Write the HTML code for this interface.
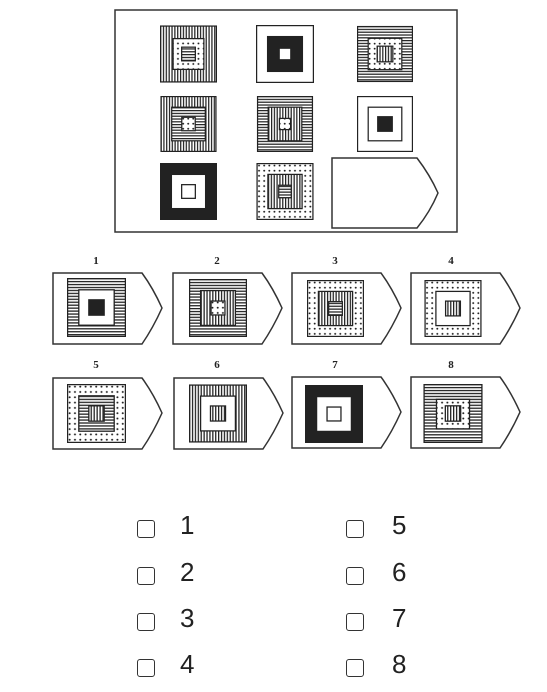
<!DOCTYPE html>
<html><head><meta charset="utf-8"><style>
html,body{margin:0;padding:0;background:#fff;width:547px;height:692px;overflow:hidden}
svg{position:absolute;left:0;top:0}
.opt{position:absolute;font-family:"Liberation Sans",sans-serif;font-size:26px;color:#222}
.cb{position:absolute;width:16px;height:16px;border:1.5px solid #333;border-radius:3px}
</style></head><body>
<svg width="547" height="480" viewBox="0 0 547 480">
<defs>
<pattern id="v" width="5" height="5" patternUnits="userSpaceOnUse"><rect width="5" height="5" fill="#fff"/><rect x="0" width="2.2" height="5" fill="#222"/></pattern>
<pattern id="h" width="5" height="5" patternUnits="userSpaceOnUse"><rect width="5" height="5" fill="#fff"/><rect y="0" width="5" height="2.2" fill="#222"/></pattern>
<pattern id="d" width="9" height="9" patternUnits="userSpaceOnUse"><rect width="9" height="9" fill="#fff"/><circle cx="4.5" cy="4.5" r="1.7" fill="#222"/></pattern>
<g id="tag"><path d="M0,0 H89 Q100,15 109,35 Q100,55 89,71 H0 Z" fill="#fff" stroke="#333" stroke-width="1.5"/></g>
</defs>
<rect x="115" y="10" width="342" height="222" fill="#fff" stroke="#333" stroke-width="1.5"/>
<g stroke="#222" stroke-width="2.2">
<!-- row1 -->
<svg x="160" y="25" width="57" height="58" viewBox="0 0 100 100"><rect x="1" y="1" width="98" height="98" fill="url(#v)"/><rect x="23" y="23" width="54" height="54" fill="url(#d)"/><rect x="38" y="38" width="24" height="24" fill="url(#h)"/></svg>
<svg x="256" y="25" width="58" height="58" viewBox="0 0 100 100"><rect x="1" y="1" width="98" height="98" fill="#fff"/><rect x="20" y="20" width="60" height="60" fill="#222"/><rect x="40" y="40" width="20" height="20" fill="#fff"/></svg>
<svg x="357" y="25" width="56" height="58" viewBox="0 0 100 100"><rect x="1" y="1" width="98" height="98" fill="url(#h)"/><rect x="20" y="22" width="60" height="56" fill="url(#d)"/><rect x="36" y="36" width="28" height="28" fill="url(#v)"/></svg>
<!-- row2 -->
<svg x="160" y="96" width="57" height="56" viewBox="0 0 100 100"><rect x="1" y="1" width="98" height="98" fill="url(#v)"/><rect x="20" y="20" width="60" height="60" fill="url(#h)"/><rect x="38" y="38" width="24" height="24" fill="url(#d)"/></svg>
<svg x="256" y="96" width="58" height="56" viewBox="0 0 100 100"><rect x="1" y="1" width="98" height="98" fill="url(#h)"/><rect x="20" y="20" width="60" height="60" fill="url(#v)"/><rect x="40" y="40" width="20" height="20" fill="url(#d)"/></svg>
<svg x="357" y="96" width="56" height="56" viewBox="0 0 100 100"><rect x="1" y="1" width="98" height="98" fill="#fff"/><rect x="20" y="20" width="60" height="60" fill="#fff"/><rect x="37" y="37" width="26" height="26" fill="#222"/></svg>
<!-- row3 -->
<svg x="160" y="163" width="57" height="57" viewBox="0 0 100 100"><rect x="1" y="1" width="98" height="98" fill="#222"/><rect x="20" y="20" width="60" height="60" fill="#fff"/><rect x="38" y="38" width="24" height="24" fill="#fff"/></svg>
<svg x="256" y="163" width="58" height="57" viewBox="0 0 100 100"><rect x="1" y="1" width="98" height="98" fill="url(#d)"/><rect x="20" y="20" width="60" height="60" fill="url(#v)"/><rect x="39" y="39" width="22" height="22" fill="url(#h)"/></svg>
</g>
<path d="M332,158 H417 Q430,175 438,193 Q430,212 417,228 H332 Z" fill="#fff" stroke="#333" stroke-width="1.5"/>

<g font-family="Liberation Serif,serif" font-weight="bold" font-size="11" fill="#222" text-anchor="middle">
<text x="96" y="264">1</text><text x="217" y="264">2</text><text x="335" y="264">3</text><text x="451" y="264">4</text>
<text x="96" y="368">5</text><text x="217" y="368">6</text><text x="335" y="368">7</text><text x="451" y="368">8</text>
</g>
<use href="#tag" x="53" y="273"/><use href="#tag" x="173" y="273"/><use href="#tag" x="292" y="273"/><use href="#tag" x="411" y="273"/>
<use href="#tag" x="53" y="378"/><use href="#tag" x="174" y="378"/><use href="#tag" x="292" y="377"/><use href="#tag" x="411" y="377"/>
<g stroke="#222" stroke-width="2.2">
<svg x="67" y="278" width="59" height="59" viewBox="0 0 100 100"><rect x="1" y="1" width="98" height="98" fill="url(#h)"/><rect x="20" y="20" width="60" height="60" fill="#fff"/><rect x="37" y="37" width="26" height="26" fill="#222"/></svg>
<svg x="189" y="279" width="58" height="58" viewBox="0 0 100 100"><rect x="1" y="1" width="98" height="98" fill="url(#h)"/><rect x="20" y="20" width="60" height="60" fill="url(#v)"/><rect x="38" y="38" width="24" height="24" fill="url(#d)"/></svg>
<svg x="307" y="280" width="57" height="57" viewBox="0 0 100 100"><rect x="1" y="1" width="98" height="98" fill="url(#d)"/><rect x="20" y="20" width="60" height="60" fill="url(#v)"/><rect x="38" y="38" width="24" height="24" fill="url(#h)"/></svg>
<svg x="424" y="280" width="58" height="57" viewBox="0 0 100 100"><rect x="1" y="1" width="98" height="98" fill="url(#d)"/><rect x="20" y="20" width="60" height="60" fill="#fff"/><rect x="37" y="37" width="26" height="26" fill="url(#v)"/></svg>
<svg x="67" y="384" width="59" height="59" viewBox="0 0 100 100"><rect x="1" y="1" width="98" height="98" fill="url(#d)"/><rect x="20" y="20" width="60" height="60" fill="url(#h)"/><rect x="37" y="37" width="26" height="26" fill="url(#v)"/></svg>
<svg x="189" y="384" width="58" height="59" viewBox="0 0 100 100"><rect x="1" y="1" width="98" height="98" fill="url(#v)"/><rect x="20" y="20" width="60" height="60" fill="#fff"/><rect x="37" y="37" width="26" height="26" fill="url(#v)"/></svg>
<svg x="305" y="385" width="58" height="58" viewBox="0 0 100 100"><rect x="1" y="1" width="98" height="98" fill="#222"/><rect x="20" y="20" width="60" height="60" fill="#fff"/><rect x="38" y="38" width="24" height="24" fill="#fff"/></svg>
<svg x="423" y="384" width="60" height="59" viewBox="0 0 100 100"><rect x="1" y="1" width="98" height="98" fill="url(#h)"/><rect x="22" y="26" width="56" height="50" fill="url(#d)"/><rect x="37" y="37" width="26" height="26" fill="url(#v)"/></svg>
</g>
</svg>

<div class="cb" style="left:137px;top:520px"></div><div class="opt" style="left:180px;top:510px">1</div>
<div class="cb" style="left:137px;top:567px"></div><div class="opt" style="left:180px;top:557px">2</div>
<div class="cb" style="left:137px;top:613px"></div><div class="opt" style="left:180px;top:603px">3</div>
<div class="cb" style="left:137px;top:659px"></div><div class="opt" style="left:180px;top:649px">4</div>
<div class="cb" style="left:346px;top:520px"></div><div class="opt" style="left:392px;top:510px">5</div>
<div class="cb" style="left:346px;top:567px"></div><div class="opt" style="left:392px;top:557px">6</div>
<div class="cb" style="left:346px;top:613px"></div><div class="opt" style="left:392px;top:603px">7</div>
<div class="cb" style="left:346px;top:659px"></div><div class="opt" style="left:392px;top:649px">8</div>
</body></html>
